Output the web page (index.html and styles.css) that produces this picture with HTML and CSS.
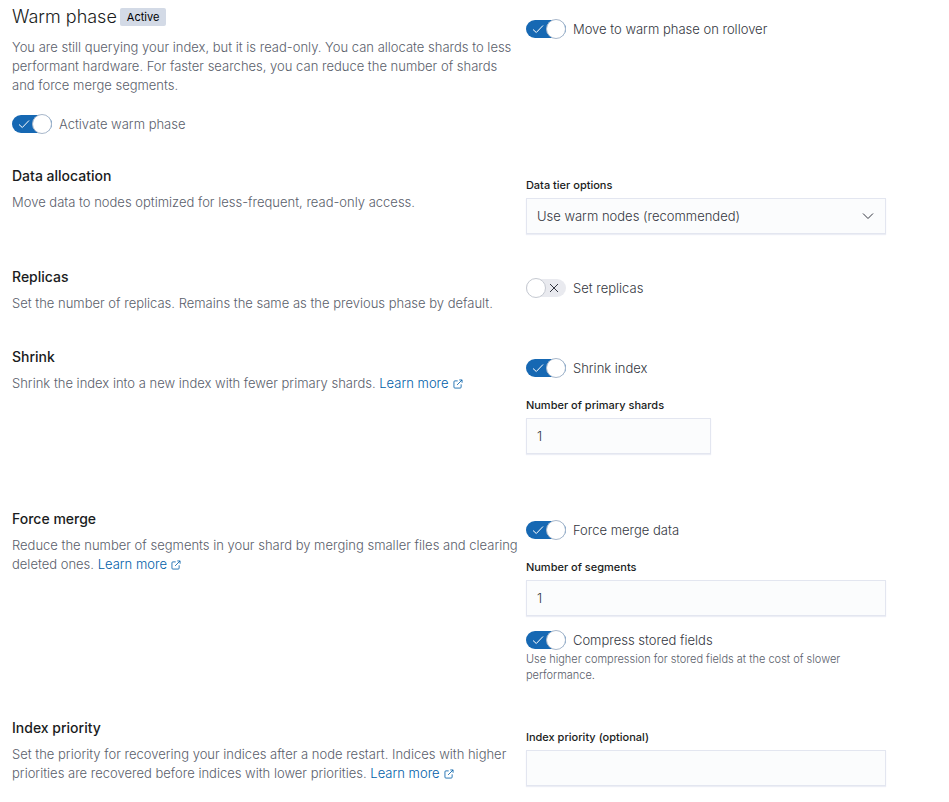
FILE: index.html
```
<!DOCTYPE html>
<html lang="en">
<head>
<meta charset="utf-8">
<title>Warm phase</title>
<link rel="stylesheet" href="styles.css">
</head>
<body>
<svg class="sprite" aria-hidden="true">
  <symbol id="popout" viewBox="0 0 16 16"><path d="M13 8.5v4.500a1.500 1.500 0 0 1-1.500 1.500H3A1.500 1.500 0 0 1 1.500 13V4.500A1.500 1.500 0 0 1 3 3h4.500M10 1.500h4.500V6M14.500 1.500 6.500 9.500"/></symbol>
  <symbol id="check" viewBox="0 0 12 10"><path d="M1 5.500 4.300 8.500 11 1.500"/></symbol>
  <symbol id="cross" viewBox="0 0 10 10"><path d="M1 1l8 8M9 1l-8 8"/></symbol>
</svg>
<main class="page">
  <section class="row">
    <div class="info">
      <h2 class="title">Warm phase <span class="badge">Active</span></h2>
      <p class="text">You are still querying your index, but it is read-only. You can allocate shards to less performant hardware. For faster searches, you can reduce the number of shards and force merge segments.</p>
      <label class="switch switch-muted switch-phase"><input type="checkbox" role="switch" checked><span class="track"><svg class="mark on"><use href="#check"/></svg><svg class="mark off"><use href="#cross"/></svg></span>Activate warm phase</label>
    </div>
    <div class="fields">
      <label class="switch"><input type="checkbox" role="switch" checked><span class="track"><svg class="mark on"><use href="#check"/></svg><svg class="mark off"><use href="#cross"/></svg></span>Move to warm phase on rollover</label>
    </div>
  </section>

  <section class="row">
    <div class="info">
      <h3 class="heading">Data allocation</h3>
      <p class="text">Move data to nodes optimized for less-frequent, read-only access.</p>
    </div>
    <div class="fields">
      <label class="label" for="tier">Data tier options</label>
      <div class="select">
        <select class="control" id="tier"><option>Use warm nodes (recommended)</option></select>
        <svg class="arrow" viewBox="0 0 12 8" aria-hidden="true"><path d="M1 1.500 6 6.500 11 1.500"/></svg>
      </div>
    </div>
  </section>

  <section class="row">
    <div class="info">
      <h3 class="heading">Replicas</h3>
      <p class="text">Set the number of replicas. Remains the same as the previous phase by default.</p>
    </div>
    <div class="fields">
      <label class="switch"><input type="checkbox" role="switch"><span class="track"><svg class="mark on"><use href="#check"/></svg><svg class="mark off"><use href="#cross"/></svg></span>Set replicas</label>
    </div>
  </section>

  <section class="row row-shrink">
    <div class="info">
      <h3 class="heading">Shrink</h3>
      <p class="text">Shrink the index into a new index with fewer primary shards. <a href="#shrink">Learn more<svg class="popout"><use href="#popout"/></svg></a></p>
    </div>
    <div class="fields">
      <label class="switch"><input type="checkbox" role="switch" checked><span class="track"><svg class="mark on"><use href="#check"/></svg><svg class="mark off"><use href="#cross"/></svg></span>Shrink index</label>
      <label class="label label-nested" for="shards">Number of primary shards</label>
      <input class="control control-short" id="shards" type="text" inputmode="numeric" value="1">
    </div>
  </section>

  <section class="row">
    <div class="info">
      <h3 class="heading">Force merge</h3>
      <p class="text">Reduce the number of segments in your shard by merging smaller files and clearing deleted ones. <a href="#merge">Learn more<svg class="popout"><use href="#popout"/></svg></a></p>
    </div>
    <div class="fields">
      <label class="switch"><input type="checkbox" role="switch" checked><span class="track"><svg class="mark on"><use href="#check"/></svg><svg class="mark off"><use href="#cross"/></svg></span>Force merge data</label>
      <label class="label label-nested" for="segments">Number of segments</label>
      <input class="control" id="segments" type="text" inputmode="numeric" value="1">
      <label class="switch switch-after"><input type="checkbox" role="switch" checked aria-describedby="compress-help"><span class="track"><svg class="mark on"><use href="#check"/></svg><svg class="mark off"><use href="#cross"/></svg></span>Compress stored fields</label>
      <p class="help" id="compress-help">Use higher compression for stored fields at the cost of slower performance.</p>
    </div>
  </section>

  <section class="row">
    <div class="info">
      <h3 class="heading">Index priority</h3>
      <p class="text">Set the priority for recovering your indices after a node restart. Indices with higher priorities are recovered before indices with lower priorities. <a href="#priority">Learn more<svg class="popout"><use href="#popout"/></svg></a></p>
    </div>
    <div class="fields">
      <label class="label" for="priority">Index priority (optional)</label>
      <input class="control" id="priority" type="text" inputmode="numeric">
    </div>
  </section>
</main>
</body>
</html>
```
FILE: styles.css
```
* {
  box-sizing: border-box;
}

body {
  margin: 0;
  background: #fff;
  color: #343741;
  font: 300 13px/19px Inter, "Liberation Sans", sans-serif;
}

h2, h3, p {
  margin: 0;
}

svg {
  fill: none;
  stroke: currentColor;
}

.sprite {
  display: none;
}

.page {
  display: flex;
  flex-direction: column;
  gap: 32px;
  padding: 8px 12px 16px;
}

.row {
  display: grid;
  grid-template-columns: 16fr 13fr;
  gap: 8px;
}

.row-shrink {
  padding-bottom: 22px;
}

.fields {
  display: flex;
  flex-direction: column;
  align-items: flex-start;
  max-width: 360px;
  padding: 11px 0 1px;
}

.title {
  display: flex;
  align-items: center;
  gap: 3px;
  height: 18px;
  margin-bottom: 12px;
  color: #1a1c21;
  font-size: 18px;
  font-weight: 300;
  line-height: 18px;
}

.badge {
  padding: 0 7px;
  border-radius: 2px;
  background: #d3dae6;
  color: #000;
  font-size: 11px;
  font-weight: 400;
  line-height: 18px;
}

.heading {
  margin-bottom: 7px;
  color: #1a1c21;
  font-size: 14px;
  font-weight: 500;
  line-height: 20px;
}

.text {
  padding-bottom: 2px;
  color: #5a606b;
}

a {
  color: #005ea8;
  text-decoration: none;
  white-space: nowrap;
}

.popout {
  width: 10px;
  height: 10px;
  margin-left: 4px;
  vertical-align: -1px;
  stroke-width: 1.3;
}

.switch {
  display: flex;
  align-items: center;
  gap: 7px;
  position: relative;
  height: 20px;
}

.switch input {
  position: absolute;
  width: 40px;
  height: 18px;
  margin: 0;
  opacity: 0;
}

.switch-muted {
  color: #5a606b;
}

.switch-phase {
  margin-top: 17px;
}

.switch-after {
  margin-top: 14px;
}

.track {
  display: flex;
  align-items: center;
  flex-direction: row-reverse;
  justify-content: space-between;
  width: 40px;
  height: 18px;
  padding-right: 7px;
  border-radius: 9px;
  background: #e9eaef;
}

.track::after {
  content: "";
  width: 18px;
  height: 18px;
  border: 1px solid #c5c9d1;
  border-radius: 50%;
  background: #fff;
}

.mark {
  width: 10px;
  height: 10px;
}

.mark.on {
  display: none;
  width: 12px;
}

:checked + .track {
  flex-direction: row;
  padding: 0 0 0 6px;
  background: #1668b3;
  color: #fff;
}

:checked + .track::after {
  border-color: #a9b8cb;
}

:checked + .track .on {
  display: block;
}

:checked + .track .off {
  display: none;
}

.label {
  margin-bottom: 5px;
  color: #1a1c21;
  font-size: 11px;
  font-weight: 500;
  line-height: 16px;
}

.label-nested {
  margin-top: 19px;
}

.select {
  position: relative;
  width: 100%;
}

.arrow {
  position: absolute;
  top: 14px;
  right: 12px;
  width: 12px;
  height: 8px;
  pointer-events: none;
}

.control {
  display: block;
  width: 100%;
  height: 36px;
  padding: 0 10px;
  border: 1px solid #e3e6f0;
  border-radius: 0;
  outline: 0;
  background: #fbfcfd;
  box-shadow: 0 1px 1px #eceef5;
  color: #343741;
  font: inherit;
  appearance: none;
}

.control:focus-visible,
:focus-visible + .track {
  box-shadow: 0 0 0 2px #8fbbe0;
}

.control-short {
  width: 185px;
}

.help {
  padding: 1px 0 2px;
  color: #5a606b;
  font-size: 11px;
  line-height: 16px;
}
```
